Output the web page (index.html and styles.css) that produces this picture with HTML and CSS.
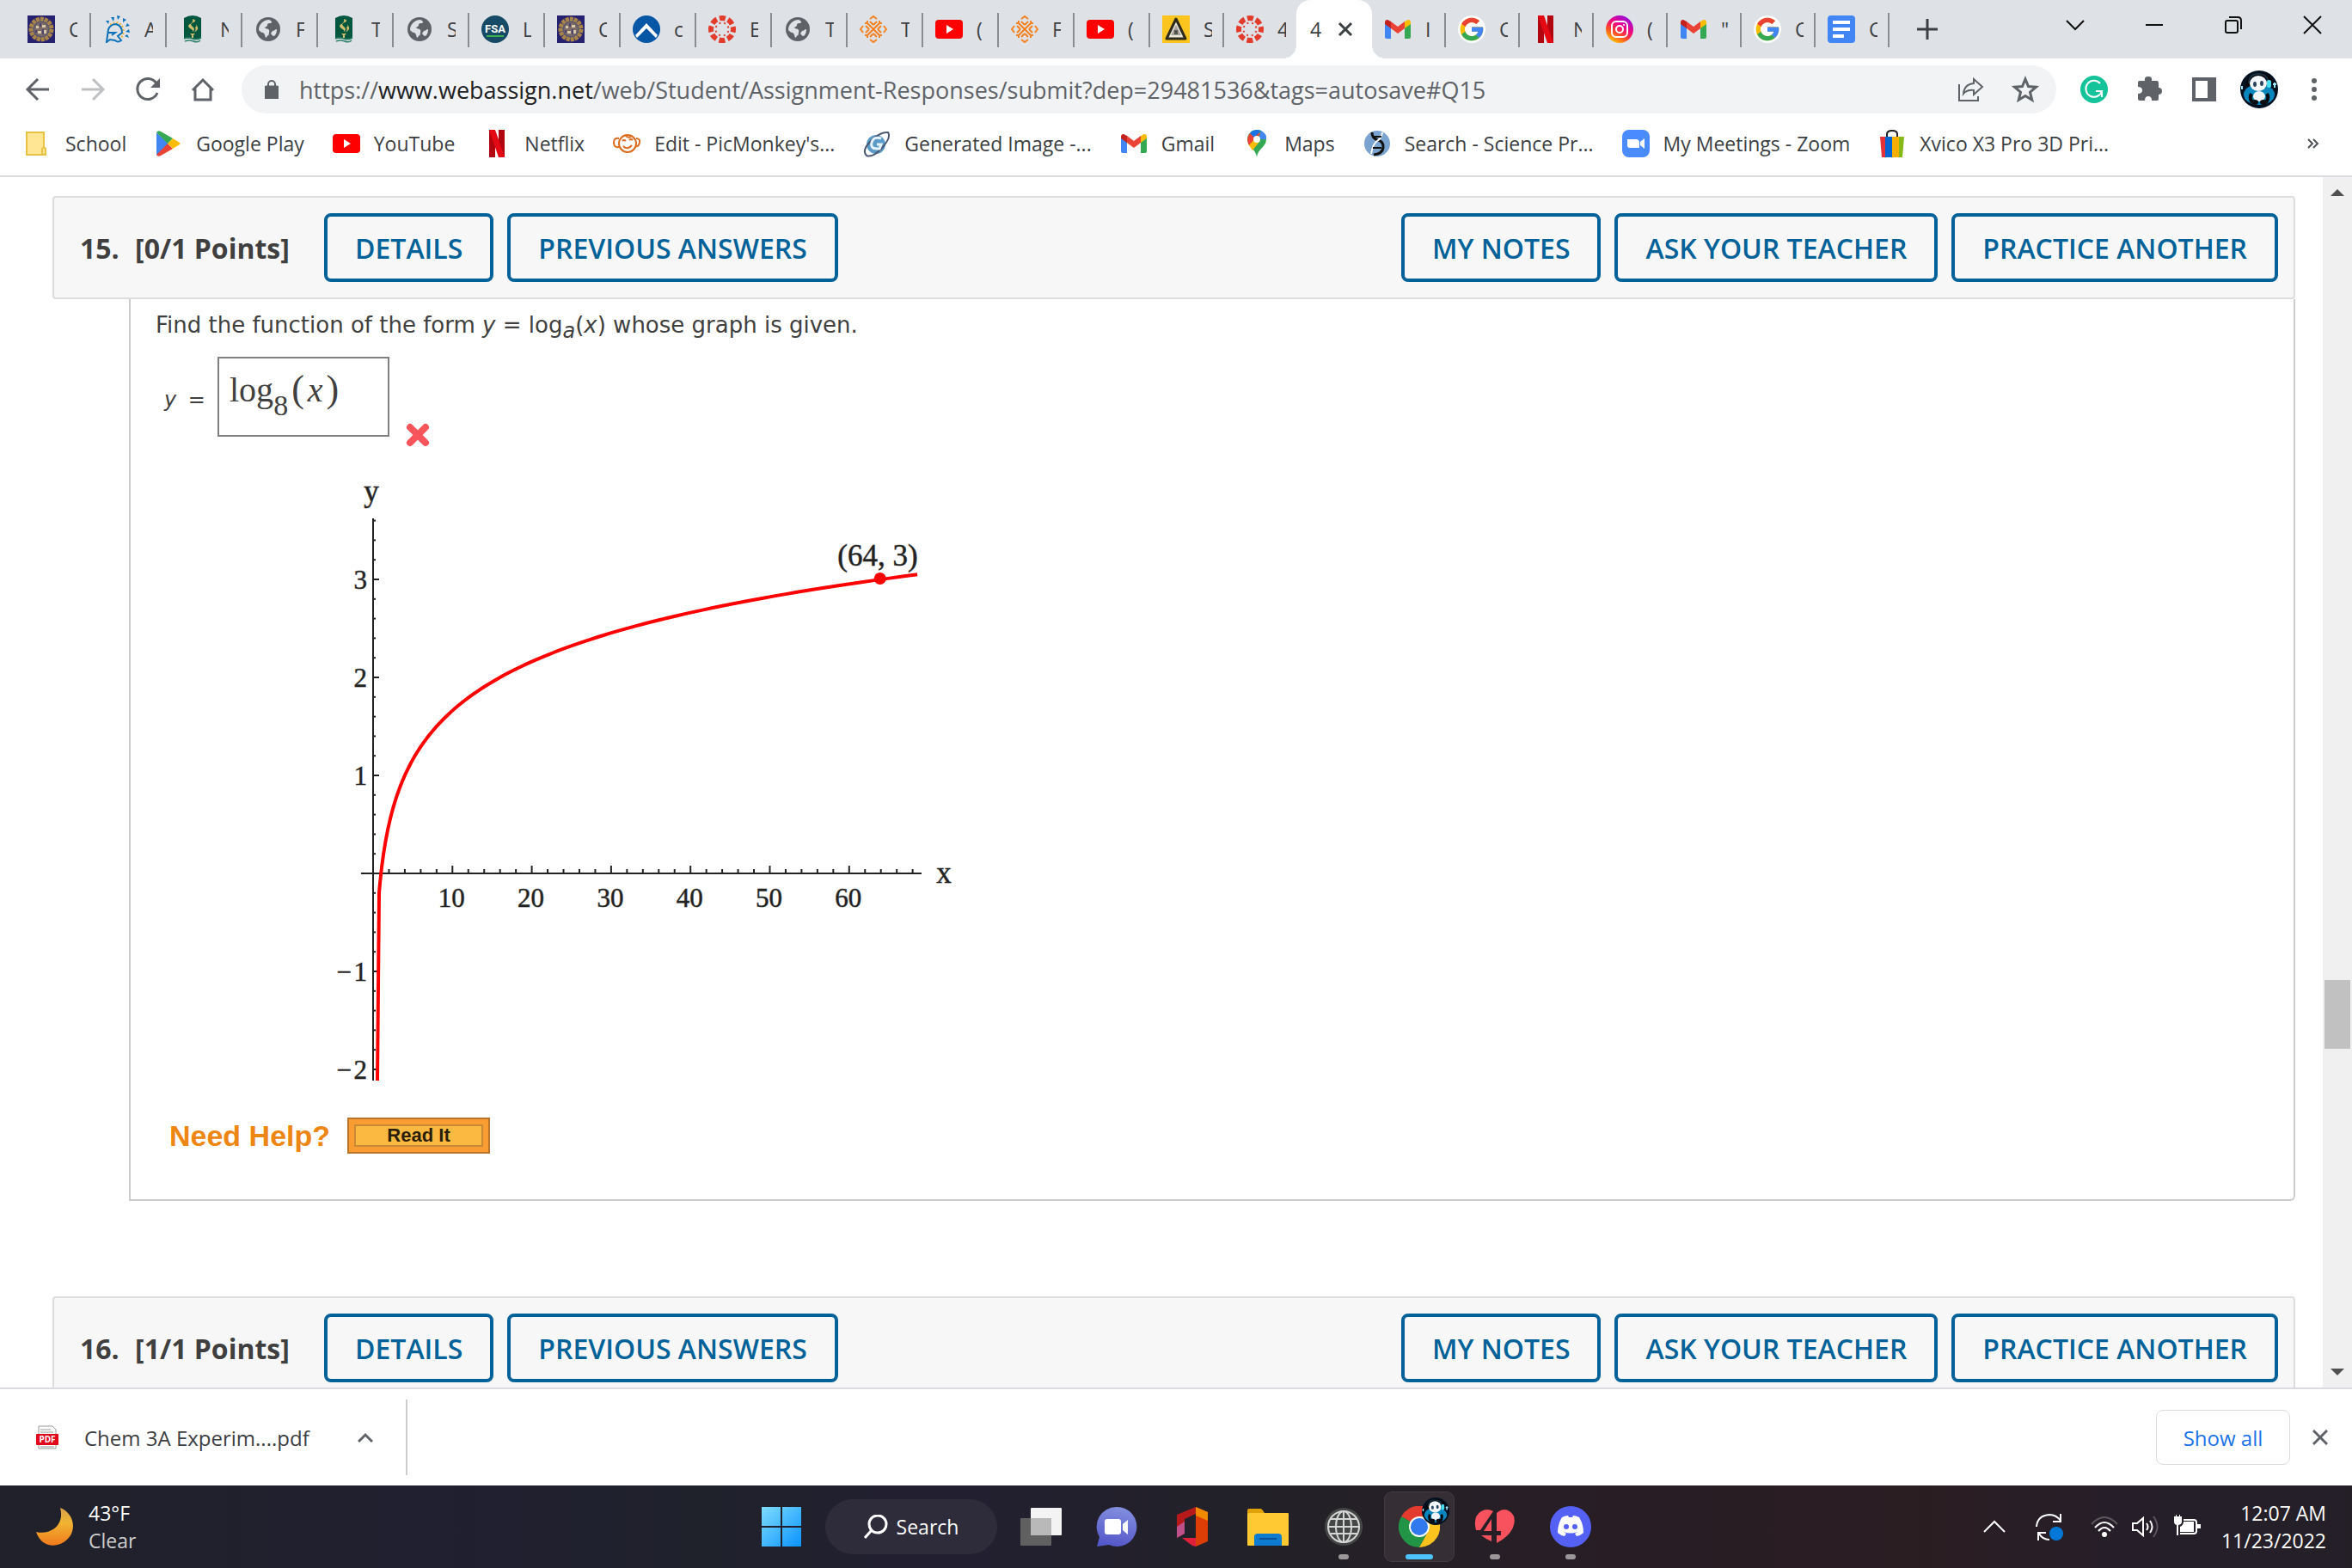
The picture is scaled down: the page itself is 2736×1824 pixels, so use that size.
FILE: index.html
```html
<!DOCTYPE html>
<html lang="en">
<head>
    <meta charset="UTF-8">
    <meta name="viewport" content="width=device-width, initial-scale=1.0">
    <title>Assignment Responses</title>
    <link rel="stylesheet" href="styles.css">
</head>
<body>

    <!-- icons used more than once -->
    <svg class="sprite" aria-hidden="true">
        <symbol id="seal" viewBox="0 0 32 32">
            <rect width="32" height="32" fill="#25216f"/>
            <circle cx="16" cy="16" r="12" fill="#5a5570" stroke="#a88546" stroke-width="5" stroke-dasharray="4 1"/>
            <circle cx="16" cy="16" r="8" fill="#7d6c68"/>
            <path d="M10 12h3v3h-3zM17 11h4v3h-4zM12 18h4v3h-4zM19 17h3v4h-3z" fill="#d8c9a8"/>
            <path d="M14 9h2v4h-2zM9 17h2v3H9zM17 16h2v6h-2z" fill="#4b4370"/>
        </symbol>
        <symbol id="torch" viewBox="0 0 32 32">
            <path d="M6 3Q16-3 26 3v24H6z" fill="#00573d"/>
            <path d="M16 4q1 4-3 6t0 5q4 2 3 4 4-3 0-6t1-5-1-4zM19 8q3 4 0 6 2 3-2 6 6-3 5-6t-3-6z" fill="#d0bd6c"/>
            <path d="M13 21h6l-2 2v3h-2v-3z" fill="#d0bd6c"/>
            <path d="M6 27q5-2 10 0t10-1M7 30q5-2 10 0t8-1" fill="none" stroke="#2d8067" stroke-width="1.500"/>
        </symbol>
        <symbol id="globe" viewBox="0 0 32 32">
            <circle cx="16" cy="16" r="14" fill="#5f6368"/>
            <path d="M17 5c3 1 4 3 2 4-2 0-4 0-4 2s-2 2-3 3 4 1 5 3-1 4 0 5c-2 1-2 3-4 4-1-3-1-5-3-6-2 0-3-1-5-3 0-6 5-12 12-12zM21 18c2 0 3-2 5-2 0 4-1 6-3 8-2 0-3-2-4-3z" fill="#dee1e6"/>
        </symbol>
        <symbol id="canvas" viewBox="0 0 32 32">
            <circle cx="16" cy="16" r="13" fill="none" stroke="#e23b2b" stroke-width="6" stroke-dasharray="7 3.210" stroke-dashoffset="3.500"/>
            <circle cx="16" cy="16" r="7.500" fill="none" stroke="#e23b2b" stroke-width="2" stroke-dasharray="2 3.890" stroke-dashoffset="-2"/>
        </symbol>
        <symbol id="diamond" viewBox="0 0 32 32">
            <g fill="none" stroke="#f58220" stroke-width="2">
                <path d="M12 4l4-3 4 3M12 28l4 3 4-3M4 12l-3 4 3 4M28 12l3 4-3 4"/>
                <path d="M16 16L9 9V6M16 16l7-7V6M16 16l-7 7v3M16 16l7 7v3M9 9H6M23 9h3M9 23H6M23 23h3M16 11l-4-4M16 11l4-4M16 21l-4 4M16 21l4 4M11 16l-4-4M11 16l-4 4M21 16l4-4M21 16l4 4"/>
            </g>
        </symbol>
        <symbol id="youtube" viewBox="0 0 32 32">
            <rect y="5" width="32" height="22" rx="4" fill="#f00"/>
            <path d="M13 11l8 5-8 5z" fill="#fff"/>
        </symbol>
        <symbol id="gmail" viewBox="0 0 32 32">
            <path d="M1 8v17a2 2 0 0 0 2 2h5V13z" fill="#4285f4"/>
            <path d="M31 8v17a2 2 0 0 1-2 2h-5V13z" fill="#34a853"/>
            <path d="M24 7v8l7-5V8c0-3-3-4-5-2z" fill="#fbbc04"/>
            <path d="M8 15V7l8 6 8-6v8l-8 6z" fill="#ea4335"/>
            <path d="M1 8v2l7 5V7L6 6C4 4 1 5 1 8z" fill="#c5221f"/>
        </symbol>
        <symbol id="google" viewBox="0 0 48 48">
            <circle cx="24" cy="24" r="24" fill="#fff"/>
            <path fill="#fbbc05" d="M43.600 20.100H42V20H24v8h11.300C33.700 32.700 29.200 36 24 36c-6.600 0-12-5.400-12-12s5.400-12 12-12c3.100 0 5.800 1.200 8 3l5.600-5.600C34 6.100 29.300 4 24 4 13 4 4 13 4 24s9 20 20 20 20-9 20-20c0-1.300-.1-2.700-.4-3.900z"/>
            <path fill="#ea4335" d="M6.300 14.700l6.600 4.800C14.700 15.100 19 12 24 12c3.100 0 5.800 1.200 8 3l5.600-5.600C34 6.100 29.300 4 24 4 16.300 4 9.700 8.300 6.300 14.700z"/>
            <path fill="#34a853" d="M24 44c5.200 0 9.900-2 13.400-5.200l-6.200-5.200C29.200 35.100 26.700 36 24 36c-5.200 0-9.600-3.300-11.300-8l-6.500 5C9.500 39.600 16.200 44 24 44z"/>
            <path fill="#4285f4" d="M43.600 20.100H24v8h11.300c-.8 2.200-2.200 4.200-4.100 5.600l6.200 5.200C37 39.200 44 34 44 24c0-1.300-.1-2.700-.4-3.900z"/>
        </symbol>
        <symbol id="netflix" viewBox="0 0 32 32">
            <path d="M7 0h7v32l-7 0zM18 0h7v32h-7z" fill="#b1060f"/>
            <path d="M7 0h7l11 32h-7z" fill="#e50914"/>
        </symbol>
        <symbol id="panda" viewBox="0 0 44 44">
            <circle cx="22" cy="22" r="22" fill="#02111f"/>
            <ellipse cx="22" cy="28" rx="18" ry="12" fill="#0786bd"/>
            <path d="M9 18C8 2 34 0 36 15" fill="none" stroke="#000" stroke-width="4"/>
            <ellipse cx="21" cy="15" rx="10" ry="9" fill="#f3f7fa"/>
            <path d="M10 15c0-9 5-11 11-11s11 3 12 10" fill="none" stroke="#182d3d" stroke-width="2"/>
            <ellipse cx="17" cy="16" rx="2" ry="3" fill="#28435c"/>
            <ellipse cx="25" cy="15" rx="2" ry="3" fill="#28435c"/>
            <rect x="31" y="11" width="5" height="9" rx="2" fill="#47dff0"/>
            <ellipse cx="22" cy="30" rx="7" ry="6" fill="#eef4f8"/>
            <path d="M13 27q-3 5 1 10M31 27q3 5-1 10" stroke="#05080c" stroke-width="4" fill="none"/>
            <ellipse cx="17" cy="37" rx="4" ry="3" fill="#080b10"/>
            <ellipse cx="27" cy="37" rx="4" ry="3" fill="#080b10"/>
            <path d="M2 18v4M40 14v6M38 16h4" stroke="#9fe8f7" stroke-width="2"/>
        </symbol>
        <symbol id="compass" viewBox="0 0 32 32">
            <circle cx="16" cy="16" r="16" fill="#0556a5"/>
            <path d="M3 23L16 9l13 14-2 3-11-11L5 26z" fill="#fff"/>
        </symbol>
    </svg>

    <div class="tab-strip">
        <div class="tab"><svg class="icon"><use href="#seal"/></svg><span>C</span></div>
        <div class="tab"><svg class="icon" viewBox="0 0 32 32"><path d="M3 6l4 0-1 4zM9 2l4 0-1 5zM16 0l4 1-3 4zM23 3l4 2-4 3zM28 9l3 3-5 1zM30 16l1 4-5-1zM28 22l2 4-5-2z" fill="#0b72b9"/><path d="M8 11q10-7 15 3 2 7-2 12" fill="none" stroke="#f2b430" stroke-width="2" stroke-dasharray="2 2"/><path d="M4 31l2-15q3-6 9-6 7 2 7 10l-5 4 4 5q-4 3-7 0l-6-1zM6 20h8l-4 3" fill="none" stroke="#0b72b9" stroke-width="2"/></svg><span>A</span></div>
        <div class="tab"><svg class="icon"><use href="#torch"/></svg><span>N</span></div>
        <div class="tab"><svg class="icon"><use href="#globe"/></svg><span>F</span></div>
        <div class="tab"><svg class="icon"><use href="#torch"/></svg><span>T</span></div>
        <div class="tab"><svg class="icon"><use href="#globe"/></svg><span>S</span></div>
        <div class="tab"><svg class="icon" viewBox="0 0 32 32"><circle cx="16" cy="16" r="16" fill="#164a66"/><text x="16" y="20" class="fsa">FSA</text><path d="M6 24h20" stroke="#37b34a" stroke-width="2"/></svg><span>L</span></div>
        <div class="tab"><svg class="icon"><use href="#seal"/></svg><span>C</span></div>
        <div class="tab"><svg class="icon"><use href="#compass"/></svg><span>c</span></div>
        <div class="tab"><svg class="icon"><use href="#canvas"/></svg><span>E</span></div>
        <div class="tab"><svg class="icon"><use href="#globe"/></svg><span>T</span></div>
        <div class="tab"><svg class="icon"><use href="#diamond"/></svg><span>T</span></div>
        <div class="tab"><svg class="icon"><use href="#youtube"/></svg><span>(</span></div>
        <div class="tab"><svg class="icon"><use href="#diamond"/></svg><span>F</span></div>
        <div class="tab"><svg class="icon"><use href="#youtube"/></svg><span>(</span></div>
        <div class="tab narrow"><svg class="icon" viewBox="0 0 32 32"><rect width="32" height="32" fill="#fbc41e"/><path d="M16 4L27 27H5z" fill="#e9e9e0" stroke="#2f2b1c" stroke-width="3" stroke-linejoin="round"/><path d="M16 11l6 12H10z" fill="#a5a39b"/><path d="M14 17h4v5h-4z" fill="#55534b"/></svg><span>S</span></div>
        <div class="tab narrow last"><svg class="icon"><use href="#canvas"/></svg><span>4</span></div>
        <div class="tab active"><span>4</span><button aria-label="Close tab"><svg width="18" height="18" viewBox="0 0 18 18"><path d="M2 2l14 14M16 2L2 16" stroke="#3c4043" stroke-width="3"/></svg></button></div>
        <div class="tab narrow"><svg class="icon"><use href="#gmail"/></svg><span>I</span></div>
        <div class="tab narrow"><svg class="icon"><use href="#google"/></svg><span>C</span></div>
        <div class="tab narrow"><svg class="icon"><use href="#netflix"/></svg><span>N</span></div>
        <div class="tab narrow"><svg class="icon" viewBox="0 0 32 32"><defs><linearGradient id="insta" x1="0.200" y1="1" x2="0.800" y2="0"><stop offset="0" stop-color="#ffd200"/><stop offset=".35" stop-color="#ff4a2a"/><stop offset=".6" stop-color="#f0077f"/><stop offset="1" stop-color="#8a10e8"/></linearGradient></defs><circle cx="16" cy="16" r="16" fill="url(#insta)"/><g fill="none" stroke="#fff" stroke-width="2"><rect x="7" y="7" width="18" height="18" rx="5"/><circle cx="16" cy="16" r="4"/></g><circle cx="21" cy="11" r="1" fill="#fff"/></svg><span>(</span></div>
        <div class="tab narrow"><svg class="icon"><use href="#gmail"/></svg><span>"</span></div>
        <div class="tab narrow"><svg class="icon"><use href="#google"/></svg><span>C</span></div>
        <div class="tab narrow"><svg class="icon" viewBox="0 0 32 32"><rect width="32" height="32" rx="4" fill="#4285f4"/><path d="M6 8h20M6 16h20M6 24h13" stroke="#fff" stroke-width="4"/></svg><span>C</span></div>
        <button class="new-tab" aria-label="New tab"><svg width="24" height="24" viewBox="0 0 24 24"><path d="M12 0v24M0 12h24" stroke="#3c4043" stroke-width="3"/></svg></button>
        <div class="window-controls">
            <button aria-label="Search tabs"><svg viewBox="0 0 20 20"><path d="M0 5l10 10L20 5"/></svg></button>
            <button aria-label="Minimize"><svg viewBox="0 0 20 20"><path d="M0 10h20"/></svg></button>
            <button aria-label="Restore"><svg viewBox="0 0 20 20"><rect x="1" y="5" width="14" height="14" rx="2"/><path d="M5 1h10q4 0 4 4v10"/></svg></button>
            <button aria-label="Close"><svg viewBox="0 0 20 20"><path d="M0 0l20 20M20 0L0 20"/></svg></button>
        </div>
    </div>

    <div class="toolbar">
        <button aria-label="Back"><svg viewBox="0 0 32 32"><path d="M29 16H5M16 4L4 16l12 12"/></svg></button>
        <button class="disabled" aria-label="Forward"><svg viewBox="0 0 32 32"><path d="M3 16h24M16 4l12 12-12 12"/></svg></button>
        <button aria-label="Reload"><svg viewBox="0 0 32 32"><path d="M26 9A12 12 0 1 0 27 20"/><path d="M30 3v11H19z" fill="#5f6368" stroke="none"/></svg></button>
        <button aria-label="Home"><svg viewBox="0 0 32 32"><path d="M4 17L16 5l12 12M7 15v13h18V15"/></svg></button>
        <div class="address">
            <svg class="lock" viewBox="0 0 16 22"><rect y="8" width="16" height="13" rx="2" fill="#5f6368"/><path d="M4 9V5a4 4 0 0 1 8 0v4" fill="none" stroke="#5f6368" stroke-width="2"/></svg>
            <span class="url">https://<b>www.webassign.net</b>/web/Student/Assignment-Responses/submit?dep=29481536&amp;tags=autosave#Q15</span>
            <button aria-label="Share"><svg class="thin" viewBox="0 0 32 32"><path d="M3 10v19h22v-5M20 4l10 9-10 9v-5Q12 16 8 21q1-11 12-12z"/></svg></button>
            <button aria-label="Bookmark"><svg viewBox="0 0 32 32"><path d="M16 4l3.500 8.500 9 .7-7 6 2.200 9L16 23.500 8.300 28.200l2.200-9-7-6 9-.7z"/></svg></button>
        </div>
        <button class="first-ext" aria-label="Grammarly"><svg viewBox="0 0 32 32"><circle cx="16" cy="16" r="16" fill="#15c39a" stroke="none"/><path d="M23 9a9.500 9.500 0 1 0 2 9h-7M25 17v8" stroke="#fff" stroke-width="2"/></svg></button>
        <button aria-label="Extensions"><svg viewBox="0 0 32 32"><path fill="#5f6368" stroke="none" d="M5 6h6q-1-5 4-5t4 5h6q2 0 2 2v6q4 0 4 4t-4 4v5q0 2-2 2h-6q0-5-4-5t-4 5H5q-2 0-2-2v-6q5 0 5-4t-5-4V8q0-2 2-2z"/></svg></button>
        <button aria-label="Side panel"><svg viewBox="0 0 32 32"><path d="M2 2h28v28H2zM6 6v20h14V6z" fill="#5f6368" fill-rule="evenodd" stroke="none"/></svg></button>
        <button class="avatar" aria-label="Profile"><svg><use href="#panda"/></svg></button>
        <button aria-label="Menu"><svg viewBox="0 0 32 32"><g fill="#5f6368" stroke="none"><circle cx="16" cy="6" r="3"/><circle cx="16" cy="16" r="3"/><circle cx="16" cy="26" r="3"/></g></svg></button>
    </div>

    <nav class="bookmarks">
        <a href="#"><svg class="icon" viewBox="0 0 32 32"><path d="M3 3h20v18l2 1v7H3z" fill="#ffe694" stroke="#e8c243" stroke-width="2"/><rect x="21" y="21" width="4" height="8" rx="2" fill="#ffe694" stroke="#e8c243" stroke-width="2"/></svg>School</a>
        <a href="#"><svg class="icon" viewBox="0 0 32 32"><path d="M2 3v27l14-14z" fill="#4285f4"/><path d="M2 3q2-3 5-1l14 8-6 6z" fill="#34a853"/><path d="M2 29q2 3 5 1l14-8-6-6z" fill="#ea4335"/><path d="M15 16l6-6 8 5q1 1 0 2l-8 5z" fill="#fbbc04"/></svg>Google Play</a>
        <a href="#"><svg class="icon"><use href="#youtube"/></svg>YouTube</a>
        <a href="#"><svg class="icon"><use href="#netflix"/></svg>Netflix</a>
        <a href="#"><svg class="icon" viewBox="0 0 32 32"><g fill="none" stroke="#dc6b1e" stroke-width="2"><circle cx="17" cy="16" r="10"/><path d="M7 10q-6-1-6 5t6 5M27 10q5 0 4 5t-5 4M14 6q3 4 7 2"/><path d="M11 13q2-2 4 0M19 12q2-2 4 0M12 19q5 5 10-1"/></g></svg>Edit - PicMonkey's...</a>
        <a href="#"><svg class="icon" viewBox="0 0 32 32"><ellipse cx="15" cy="17" rx="11" ry="11" fill="#5b9bc9"/><path d="M4 30q-6-6 5-17T29 3q4 6-7 18T4 30z" fill="none" stroke="#4a5570" stroke-width="2"/><path d="M21 10q-9-3-11 5t9 7l2-5h-5" fill="none" stroke="#e7f3fb" stroke-width="3"/></svg>Generated Image -...</a>
        <a href="#"><svg class="icon"><use href="#gmail"/></svg>Gmail</a>
        <a href="#"><svg class="icon" viewBox="0 0 32 32"><path d="M16 32C15 22 5 20 5 11a11 11 0 0 1 22 0c0 9-10 11-11 21z" fill="#34a853"/><path d="M8 4A11 11 0 0 0 8 19L21 4z" fill="#ea4335"/><path d="M8 4a11 11 0 0 1 13-3l-8 8z" fill="#1a73e8"/><path d="M21 1q7 4 6 10l-9 0z" fill="#4285f4"/><path d="M7 18l7-8 5 4-8 10z" fill="#fbbc04"/><circle cx="16" cy="11" r="4" fill="#fff"/></svg>Maps</a>
        <a href="#"><svg class="icon" viewBox="0 0 32 32"><ellipse cx="16" cy="16" rx="15" ry="15" fill="#7ba3d0"/><path d="M10 3q0 7 7 9t6 9-11 8" fill="none" stroke="#111" stroke-width="3"/><path d="M22 3q-1 7-6 10T9 28" fill="none" stroke="#fff" stroke-width="2"/><path d="M12 8h9M11 21h10" stroke="#111" stroke-width="2"/></svg>Search - Science Pr...</a>
        <a href="#"><svg class="icon" viewBox="0 0 32 32"><rect width="32" height="32" rx="8" fill="#4a8cff"/><path d="M6 11h10q4 0 4 4v6H9q-3 0-3-3zM21 14l5-4v12l-5-4z" fill="#fff"/></svg>My Meetings - Zoom</a>
        <a href="#"><svg class="icon" viewBox="0 0 32 32"><path d="M10 10V5q0-4 6-4t6 4v5" fill="none" stroke="#222" stroke-width="2"/><path d="M2 8h6v24H4z" fill="#e53238"/><path d="M8 8h8v24H8z" fill="#0064d2"/><path d="M16 8h8v24h-8z" fill="#f5af02"/><path d="M24 8h6l-2 24h-4z" fill="#86b817"/></svg>Xvico X3 Pro 3D Pri...</a>
        <a href="#" class="more" aria-label="More bookmarks"><svg width="14" height="12" viewBox="0 0 14 12"><path d="M1 1l5 5-5 5M7 1l5 5-5 5" fill="none" stroke="#4d5156" stroke-width="2"/></svg></a>
    </nav>

    <div class="page">
        <main>
            <section class="question">
                <header>
                    <h2>15. <span>[0/1 Points]</span></h2>
                    <button>DETAILS</button>
                    <button>PREVIOUS ANSWERS</button>
                    <div class="right">
                        <button>MY NOTES</button>
                        <button>ASK YOUR TEACHER</button>
                        <button>PRACTICE ANOTHER</button>
                    </div>
                </header>
                <div class="content">
                    <p>Find the function of the form <i>y</i> = log<sub><i>a</i></sub>(<i>x</i>) whose graph is given.</p>
                    <div class="answer">
                        <span class="lhs"><i>y</i> =</span>
                        <div class="math" role="textbox" aria-label="Answer">log<sub>8</sub><span class="paren">(</span><i>x</i><span class="paren">)</span></div>
                        <svg class="wrong" viewBox="0 0 28 28"><path d="M5 5l18 18M23 5L5 23" stroke="#f9555a" stroke-width="8" stroke-linecap="round"/></svg>
                    </div>
                    <svg class="graph" id="graph" viewBox="360 550 800 730" role="img" aria-label="Graph of the logarithmic function">
                        <g id="axes" stroke="#222" stroke-width="2"></g>
                        <polyline id="curve" fill="none" stroke="#f00" stroke-width="4"/>
                        <circle id="point" r="7" fill="#f00"/>
                        <g id="labels">
                            <text x="432" y="583" class="name">y</text>
                            <text x="1098" y="1027" class="name">x</text>
                            <text x="1021" y="658" class="name">(64, 3)</text>
                        </g>
                    </svg>
                    <div class="help">
                        <span>Need Help?</span>
                        <button>Read It</button>
                    </div>
                </div>
            </section>

            <section class="question">
                <header>
                    <h2>16. <span>[1/1 Points]</span></h2>
                    <button>DETAILS</button>
                    <button>PREVIOUS ANSWERS</button>
                    <div class="right">
                        <button>MY NOTES</button>
                        <button>ASK YOUR TEACHER</button>
                        <button>PRACTICE ANOTHER</button>
                    </div>
                </header>
            </section>
        </main>
        <div class="scrollbar">
            <svg width="16" height="8" viewBox="0 0 16 8"><path d="M8 0l8 8H0z" fill="#505050"/></svg>
            <div class="thumb"></div>
            <svg width="16" height="8" viewBox="0 0 16 8"><path d="M0 0h16L8 8z" fill="#505050"/></svg>
        </div>
    </div>

    <div class="downloads">
        <div class="file">
            <svg width="26" height="28" viewBox="0 0 26 28"><path d="M3 1h16l4 4v22H3z" fill="#fff" stroke="#999" stroke-width="1"/><path d="M5 5h12M5 8h15M5 25h16" stroke="#999"/><rect y="10" width="26" height="13" rx="1" fill="#e2061b"/><text x="13" y="20" class="pdf">PDF</text></svg>
            <span>Chem 3A Experim....pdf</span>
            <button aria-label="Options"><svg width="18" height="12" viewBox="0 0 18 12"><path d="M1 11l8-8 8 8" fill="none" stroke="#5f6368" stroke-width="3"/></svg></button>
        </div>
        <button class="show-all">Show all</button>
        <button class="close" aria-label="Close"><svg width="18" height="18" viewBox="0 0 18 18"><path d="M1 1l16 16M17 1L1 17" stroke="#5f6368" stroke-width="3"/></svg></button>
    </div>

    <footer class="taskbar">
        <div class="weather">
            <svg width="44" height="44" viewBox="0 0 44 44"><defs><linearGradient id="moon" x1="0" y1="0" x2="0" y2="1"><stop offset="0" stop-color="#d9a04a"/><stop offset=".4" stop-color="#f0b432"/><stop offset="1" stop-color="#f07a1c"/></linearGradient></defs><path d="M28 0C44 6 48 26 36 37S6 46 0 28C14 32 34 22 28 0z" fill="url(#moon)"/></svg>
            <div>43°F<br><span>Clear</span></div>
        </div>
        <div class="apps">
            <button class="app" aria-label="Start"><svg viewBox="0 0 48 48"><defs><linearGradient id="win" x1="0" y1="0" x2="1" y2="1"><stop offset="0" stop-color="#7fdcff"/><stop offset="1" stop-color="#0a93ff"/></linearGradient></defs><path d="M1 1h22v22H1zM25 1h22v22H25zM1 25h22v22H1zM25 25h22v22H25z" fill="url(#win)"/></svg></button>
            <button class="search"><svg width="28" height="28" viewBox="0 0 28 28"><g fill="none" stroke="#fff" stroke-width="3"><circle cx="16" cy="11" r="10"/><path d="M9 18l-8 9"/></g></svg>Search</button>
            <button class="app" aria-label="Task view"><svg viewBox="0 0 48 48"><rect x="12" y="2" width="36" height="32" rx="1" fill="#f3f3f3"/><rect y="14" width="36" height="32" rx="1" fill="#606060"/><rect x="12" y="14" width="24" height="20" fill="#b9b9b9"/></svg></button>
            <button class="app" aria-label="Chat"><svg viewBox="0 0 48 48"><defs><linearGradient id="chat" x1="0.700" y1="0" x2="0.500" y2="1"><stop offset="0" stop-color="#8490df"/><stop offset="1" stop-color="#5558c9"/></linearGradient></defs><path d="M24 1a23 23 0 1 1-9 44L1 47l3-11A23 23 0 0 1 24 1z" fill="url(#chat)"/><rect x="10" y="15" width="19" height="18" rx="3" fill="#fff"/><path d="M31 21l6-5v17l-6-5z" fill="#fff"/></svg></button>
            <button class="app" aria-label="Office"><svg viewBox="0 0 48 48"><path d="M6 10L28 1v8l-13 6v17l-9 5z" fill="#b81a1c"/><path d="M6 24l9-6v14l-9 5z" fill="#c0508a"/><path d="M28 1l14 6v34l-14 6V1z" fill="#dc3e06"/><path d="M28 1l14 6v10l-14-6z" fill="#f28a00"/><path d="M12 37h16v10l-4-1z" fill="#e0203a"/></svg></button>
            <button class="app" aria-label="File Explorer"><svg viewBox="0 0 48 48"><path d="M0 5q0-2 2-2h13q2 0 3 2l2 3H0z" fill="#dfa208"/><rect y="8" width="48" height="38" rx="1" fill="#ffc933"/><path d="M8 46V36q0-4 4-4h24q4 0 4 4v10z" fill="#0c7bd0"/><path d="M14 38h20" stroke="#0a4f98" stroke-width="2"/></svg></button>
            <button class="app running" aria-label="Browser"><svg viewBox="0 0 48 48"><circle cx="24" cy="24" r="22" fill="#454646"/><g fill="none" stroke="#d5d5d5" stroke-width="2"><circle cx="24" cy="24" r="18"/><ellipse cx="24" cy="24" rx="9" ry="18"/><path d="M24 6v36M6 24h36M9 15h30M9 32h30"/></g></svg></button>
            <button class="app running current" aria-label="Chrome"><svg viewBox="0 0 48 48"><path d="M24 24L3 12a24 24 0 0 1 42 0z" fill="#e33b2e"/><path d="M24 24L3.200 12A24 24 0 0 0 24 48l10-18z" fill="#219446"/><path d="M24 24l10 6-10 18a24 24 0 0 0 21-36H24z" fill="#fcc31e"/><circle cx="24" cy="24" r="12" fill="#fff"/><circle cx="24" cy="24" r="10" fill="#3079ee"/></svg><svg class="badge"><use href="#panda"/></svg></button>
            <button class="app running" aria-label="Four"><svg viewBox="0 0 48 48"><path d="M22 6L7 28H2Q-2 12 8 6q7-4 14 0z" fill="#f9525f"/><path d="M20 15v14h-9zM8 34h12v7q-7-3-12-7zM26 43V34h5v-5h-5V8q8-7 15-2 9 6 4 19-5 11-19 18z" fill="#f9525f"/></svg></button>
            <button class="app running" aria-label="Discord"><svg viewBox="0 0 48 48"><circle cx="24" cy="24" r="24" fill="#5560f5"/><path d="M14 13q4-2 7-2l1 2h4l1-2q3 0 7 2 5 8 5 18-3 3-8 4l-2-3 3-2q-8 3-16 0l3 2-2 3q-5-1-8-4 0-10 5-18z" fill="#fff"/><circle cx="19" cy="24" r="3" fill="#5560f5"/><circle cx="29" cy="24" r="3" fill="#5560f5"/></svg></button>
        </div>
        <div class="tray">
            <svg viewBox="0 0 32 32"><path d="M4 22l12-12 12 12"/></svg>
            <svg viewBox="0 0 32 32"><path d="M1 16Q2 3 16 2q8 0 13 7M29 1v9h-9M3 32v-9h9M4 24q4 7 12 7"/><circle cx="24" cy="24" r="8" fill="#0078d7" stroke="none"/></svg>
            <svg viewBox="0 0 32 32"><path d="M1 13q15-16 30 0" stroke="#5c565c"/><path d="M5 17q11-12 22 0M9 21q7-8 14 0" /><circle cx="16" cy="25" r="3" fill="#fff" stroke="none"/></svg>
            <svg viewBox="0 0 32 32"><path d="M1 12h5l7-6v20l-7-6H1zM17 12q3 4 0 8M21 9q5 7 0 14"/><path d="M25 4q9 12 0 24" stroke="#5c565c"/></svg>
            <svg viewBox="0 0 32 32"><path d="M12 8h12q3 0 3 3v10q0 3-3 3H8M5 14v12"/><path d="M1 4h2V2h1v2h3V2h1v2h2v6q0 4-5 4-4 0-4-4zM12 10h12v12H8v-6q4-2 4-6zM28 13h4v5h-4z" fill="#fff" stroke="none"/></svg>
            <div class="clock">12:07 AM<br>11/23/2022</div>
        </div>
    </footer>

    <script>
        // origin and scale of the plot, in svg units
        const ox = 434, oy = 1016, sx = 9.23, sy = 114;
        const axes = document.getElementById("axes");
        const labels = document.getElementById("labels");

        function line(x1, y1, x2, y2) {
            const el = document.createElementNS("http://www.w3.org/2000/svg", "line");
            el.setAttribute("x1", x1);
            el.setAttribute("y1", y1);
            el.setAttribute("x2", x2);
            el.setAttribute("y2", y2);
            axes.appendChild(el);
        }

        function label(x, y, text, cls) {
            const el = document.createElementNS("http://www.w3.org/2000/svg", "text");
            el.setAttribute("x", x);
            el.setAttribute("y", y);
            el.setAttribute("class", cls);
            el.textContent = text;
            labels.appendChild(el);
        }

        line(420, oy, 1072, oy);
        line(ox, 603, ox, 1257);

        // x ticks every 2, numbers every 10
        for (let i = 2; i <= 68; i += 2) {
            const x = ox + i * sx;
            line(x, oy, x, oy - (i % 10 === 0 ? 9 : 5));
            if (i % 10 === 0) label(x - 1, 1055, i, "x-num");
        }

        // y ticks every 0.2, numbers every 1
        for (let i = -10; i <= 18; i++) {
            if (i === 0) continue;
            const y = oy - i * sy / 5;
            line(ox, y, ox + (i % 5 === 0 ? 7 : 3), y);
            if (i % 5 === 0) label(427, y + 11, String(i / 5).replace("-", "−\u200a"), "y-num");
        }

        // y = log4(x)
        const points = ["439,1257", "441,1039"];
        for (let y = -0.19; y < 3.06; y += 0.02) {
            points.push((ox + Math.pow(4, y) * sx) + "," + (oy - y * sy));
        }
        document.getElementById("curve").setAttribute("points", points.join(" "));
        document.getElementById("point").setAttribute("cx", ox + 64 * sx - 1);
        document.getElementById("point").setAttribute("cy", oy - 3 * sy - 1);
    </script>

</body>
</html>
```
FILE: styles.css
```css
* {
    box-sizing: border-box;
}
body {
    margin: 0;
    height: 100vh;
    display: flex;
    flex-direction: column;
    overflow: hidden;
    background: #fff;
    font-family: "Open Sans", sans-serif;
    font-size: 23px;
    color: #3c4043;
}
button {
    border: none;
    background: none;
    padding: 0;
    font: inherit;
    color: inherit;
    cursor: pointer;
}
svg {
    display: block;
    flex: none;
}
.sprite {
    position: absolute;
    width: 0;
    height: 0;
}
.icon {
    width: 32px;
    height: 32px;
}

/* tabs */
.tab-strip {
    display: flex;
    flex: none;
    height: 68px;
    padding-left: 18px;
    background: #dee1e6;
}
.tab {
    position: relative;
    display: flex;
    align-items: center;
    gap: 16px;
    width: 88px;
    padding-left: 14px;
}
.tab.narrow {
    width: 86px;
}
.tab.last {
    width: 84px;
}
.tab span {
    width: 10px;
    overflow: hidden;
    white-space: nowrap;
}
.tab::after {
    content: "";
    position: absolute;
    right: 0;
    top: 15px;
    width: 2px;
    height: 40px;
    background: #8a8d91;
}
.tab.last::after {
    display: none;
}
.tab.active {
    padding-left: 16px;
    background: #fff;
    border-radius: 16px 16px 0 0;
}
.tab.active span {
    width: 16px;
}
.tab.active::before,
.tab.active::after {
    content: "";
    position: absolute;
    top: auto;
    bottom: 0;
    left: -16px;
    width: 16px;
    height: 16px;
    background: radial-gradient(circle at 0 0, #dee1e6 16px, #fff 16px);
}
.tab.active::after {
    left: 88px;
    background: radial-gradient(circle at 100% 0, #dee1e6 16px, #fff 16px);
}
.new-tab {
    margin-left: 32px;
}
.window-controls {
    display: flex;
    align-items: center;
    height: 58px;
    margin-left: auto;
}
.window-controls button {
    display: flex;
    justify-content: center;
    width: 92px;
}
.window-controls svg {
    width: 20px;
    height: 20px;
    overflow: visible;
    fill: none;
    stroke: #111;
    stroke-width: 2;
}

/* toolbar */
.toolbar {
    display: flex;
    align-items: center;
    flex: none;
    height: 72px;
    padding: 0 12px;
}
.toolbar button {
    display: flex;
    justify-content: center;
    width: 64px;
}
.toolbar svg {
    width: 32px;
    height: 32px;
    fill: none;
    stroke: #5f6368;
    stroke-width: 3;
}
.toolbar .thin {
    stroke-width: 2;
}
.toolbar .disabled {
    opacity: 0.4;
}
.toolbar .first-ext {
    margin-left: 12px;
}
.toolbar .avatar svg {
    width: 44px;
    height: 44px;
    stroke: none;
}
.address {
    flex: 1;
    display: flex;
    align-items: center;
    height: 56px;
    margin-left: 13px;
    padding: 0 4px 0 27px;
    border-radius: 28px;
    background: #f1f3f4;
}
.address .lock {
    width: 16px;
    height: 22px;
}
.url {
    flex: 1;
    margin-left: 24px;
    font-size: 27px;
    color: #5f6368;
}
.url b {
    font-weight: 400;
    color: #202124;
}

/* bookmarks */
.bookmarks {
    display: flex;
    align-items: center;
    flex: none;
    gap: 33px;
    height: 66px;
    padding: 0 38px 10px 28px;
    border-bottom: 2px solid #dadce0;
}
.bookmarks a {
    display: flex;
    align-items: center;
    gap: 16px;
    color: #3c4043;
    text-decoration: none;
    white-space: nowrap;
}
.bookmarks .more {
    margin-left: auto;
}

/* web page */
.page {
    flex: 1;
    display: flex;
    min-height: 0;
}
main {
    flex: 1;
    padding: 22px 32px 0 61px;
    overflow: hidden;
}
.question {
    margin-bottom: 111px;
}
.question header {
    display: flex;
    align-items: center;
    gap: 16px;
    height: 120px;
    padding: 0 18px 0 30px;
    background: #f7f7f7;
    border: 2px solid #ddd;
    border-radius: 4px;
}
.question h2 {
    width: 268px;
    margin: 0;
    font-size: 32px;
    color: #3f3f3f;
    white-space: nowrap;
}
.question h2 span {
    margin-left: 10px;
}
.question header button {
    height: 80px;
    padding: 0 32px;
    border: 4px solid #006298;
    border-radius: 8px;
    font-size: 32px;
    font-weight: 600;
    color: #006298;
}
.question .right {
    display: flex;
    gap: 16px;
    margin-left: auto;
}
.content {
    margin-left: 89px;
    padding: 10px 30px 53px 29px;
    border: 2px solid #ccc;
    border-top: none;
    border-radius: 0 0 6px 0;
    font-family: "DejaVu Sans", Verdana, sans-serif;
    font-size: 26px;
    color: #404040;
}
.content p {
    margin: 0;
    height: 57px;
    line-height: 40px;
}
.content p sub {
    line-height: 0;
    font-size: 24px;
}
.answer {
    display: flex;
    align-items: center;
    height: 105px;
    padding-left: 10px;
}
.lhs {
    width: 62px;
    padding-bottom: 6px;
    font-size: 24px;
    word-spacing: 6px;
}
.math {
    align-self: flex-start;
    width: 200px;
    height: 93px;
    padding: 12px;
    border: 2px solid #808080;
    font-family: "Liberation Serif", serif;
    font-size: 40px;
    line-height: 50px;
}
.math sub {
    font-size: 34px;
    line-height: 0;
    vertical-align: -16px;
}
.math .paren {
    margin: 0 4px;
    font-size: 44px;
    line-height: 0;
}
.wrong {
    align-self: flex-end;
    width: 28px;
    height: 28px;
    margin-left: 19px;
}
.graph {
    width: 800px;
    height: 730px;
    margin: 30px 0 0 179px;
}
.graph text {
    font-family: "Liberation Serif", serif;
    font-size: 31px;
    fill: #222;
    stroke: #222;
    stroke-width: 1px;
    stroke-opacity: 0.5;
}
.graph .name {
    font-size: 35px;
    text-anchor: middle;
}
.graph .x-num {
    text-anchor: middle;
}
.graph .y-num {
    text-anchor: end;
}
.help {
    display: flex;
    align-items: center;
    gap: 20px;
    margin-top: 20px;
    padding-left: 16px;
    font-family: "Liberation Sans", Arial, sans-serif;
    font-weight: bold;
}
.help span {
    font-size: 34px;
    line-height: 42px;
    color: #ee8613;
}
.help button {
    width: 166px;
    height: 42px;
    border: 2px solid #b8742a;
    background: #fcb941;
    box-shadow: inset 0 0 0 6px #f99d32, inset 0 0 0 8px #c98a35;
    font-size: 22px;
    color: #2b1e08;
}
.scrollbar {
    display: flex;
    flex-direction: column;
    align-items: center;
    justify-content: space-between;
    width: 34px;
    padding: 14px 0;
    background: #f0f0f0;
}
.thumb {
    width: 30px;
    height: 80px;
    margin-top: 540px;
    background: #c1c1c1;
}

/* downloads bar */
.downloads {
    display: flex;
    align-items: center;
    flex: none;
    height: 114px;
    padding-right: 28px;
    border-top: 2px solid #dadce0;
}
.file {
    display: flex;
    align-items: center;
    gap: 30px;
    width: 474px;
    height: 88px;
    padding-left: 42px;
    border-right: 2px solid #ccc;
    font-size: 24px;
}
.file button {
    margin-left: 26px;
}
.show-all {
    width: 156px;
    height: 64px;
    margin-left: auto;
    border: 1px solid #dadce0;
    border-radius: 8px;
    font-size: 24px;
    color: #1a73e8;
}
.close {
    margin-left: 26px;
}
.pdf {
    font-size: 10px;
    font-weight: bold;
    text-anchor: middle;
    fill: #fff;
}
.fsa {
    font-family: Roboto, sans-serif;
    font-size: 13px;
    font-weight: bold;
    text-anchor: middle;
    fill: #fff;
}

/* taskbar */
.taskbar {
    display: grid;
    grid-template-columns: 1fr auto 1fr;
    align-items: center;
    flex: none;
    height: 96px;
    background: linear-gradient(90deg, #20212a, #201f30 20%, #1f212b 30%, #221f31 40%, #232127 55%, #281d25 68%, #2a1d22 82%, #251f2a 92%, #241f27);
    color: #fff;
    line-height: 32px;
}
.weather {
    display: flex;
    gap: 17px;
    align-items: center;
    padding-left: 42px;
}
.weather span {
    color: #ccc;
}
.apps {
    display: flex;
    gap: 8px;
}
.app {
    position: relative;
    display: flex;
    align-items: center;
    justify-content: center;
    width: 80px;
    height: 80px;
    border-radius: 8px;
}
.app svg {
    width: 48px;
    height: 48px;
}
.app.running::after {
    content: "";
    position: absolute;
    bottom: 2px;
    width: 12px;
    height: 6px;
    border-radius: 3px;
    background: #9b9799;
}
.app.current {
    background: #352e34;
    box-shadow: 0 0 0 1px #423b41;
}
.app.current::after {
    width: 32px;
    background: #4cc2ff;
}
.app .badge {
    position: absolute;
    top: 6px;
    right: 5px;
    width: 32px;
    height: 32px;
}
.search {
    display: flex;
    align-items: center;
    justify-content: center;
    gap: 10px;
    width: 200px;
    height: 64px;
    margin: 8px 3px;
    border-radius: 32px;
    background: #2e2c3b;
}
.tray {
    display: flex;
    align-items: center;
    justify-content: flex-end;
    gap: 16px;
    padding-right: 30px;
}
.tray svg {
    width: 32px;
    height: 32px;
    fill: none;
    stroke: #fff;
    stroke-width: 2;
}
.tray svg:nth-child(2) {
    margin: 0 16px;
}
.clock {
    width: 130px;
    text-align: right;
}
```
